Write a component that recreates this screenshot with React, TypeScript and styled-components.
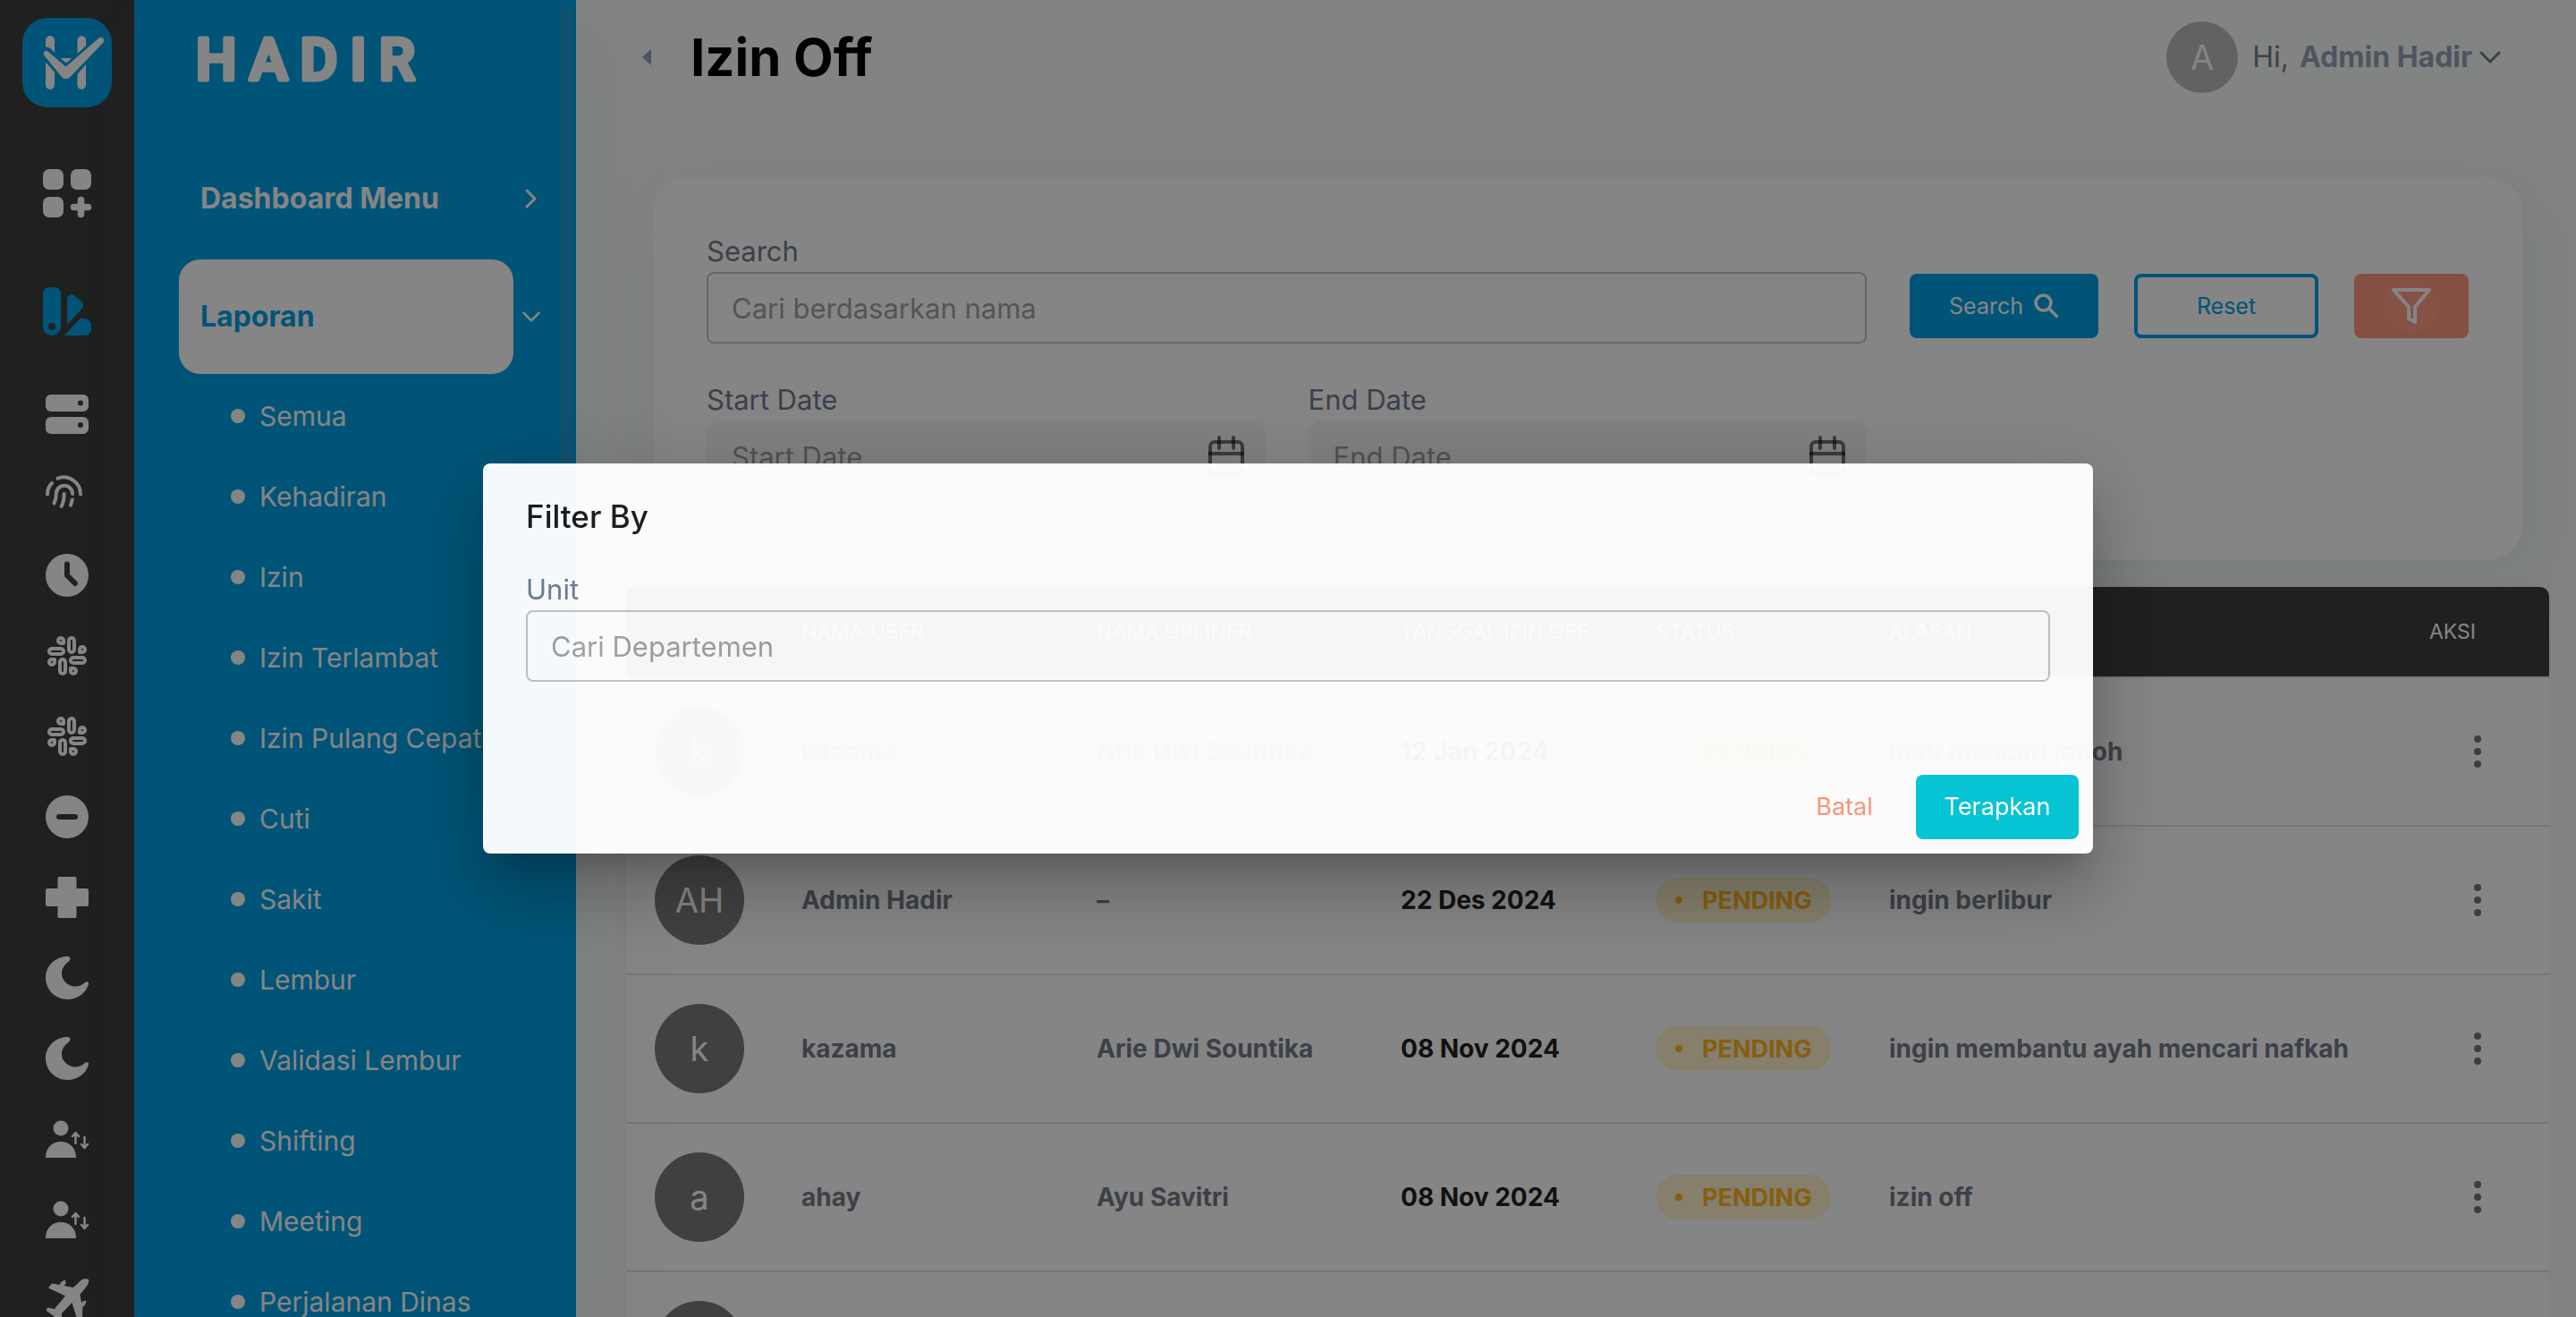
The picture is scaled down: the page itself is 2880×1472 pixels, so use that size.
import React from "react";
import styled, { createGlobalStyle, css } from "styled-components";

const white = "#fff";
const blue = "#00a1e4";
const ink = "#3e3e3e";
const muted = "#757c8b";
const navy = "#98a2bb";

const GlobalStyle = createGlobalStyle`
  *, *::before, *::after { box-sizing: border-box; }
  html, body { margin: 0; background: #fafdfc; overflow: hidden; }
  body, button, input, table { font-family: Inter, "Noto Sans", sans-serif; }
  button { border: 0; margin: 0; padding: 0; background: none; cursor: pointer; }
  a { color: inherit; text-decoration: none; }
`;

/* ---------- layout ---------- */

const Shell = styled.div`
  display: flex;
  height: 100vh;
  overflow: hidden;
`;

const Rail = styled.nav`
  flex: 0 0 150px;
  display: flex;
  flex-direction: column;
  align-items: center;
  background: ${ink};
  overflow: hidden;
`;

const Brand = styled.a`
  flex: none;
  width: 100px;
  height: 100px;
  margin: 20px 0 30px;
  border-radius: 28px;
  background: ${blue};
`;

const RailLink = styled.a<{ $tall?: boolean; $active?: boolean }>`
  flex: none;
  display: flex;
  align-items: center;
  justify-content: center;
  width: 100%;
  height: ${(p) => (p.$tall ? 132 : 90)}px;
  color: ${(p) => (p.$active ? blue : white)};
`;

const RailList = styled.div`
  width: 100%;
  padding-top: 4px;
`;

const Sidebar = styled.aside`
  position: relative;
  flex: 0 0 494px;
  padding: 0 30px 0 50px;
  background: ${blue};
  box-shadow: 28px 34px 80px 8px rgba(112, 144, 176, 0.08);
  overflow: hidden;
`;

const ScrollThumb = styled.span`
  position: absolute;
  top: 4px;
  right: 4px;
  width: 14px;
  height: 900px;
  border-radius: 7px;
  background: rgba(112, 144, 176, 0.25);
`;

const WordmarkLink = styled.a`
  display: block;
  height: 158px;
  padding-left: 16px;
`;

const WordmarkSvg = styled.svg`
  display: block;
  fill: ${white};
  stroke: ${white};
  stroke-width: 5px;
  stroke-linejoin: round;
  font-family: Roboto, sans-serif;
  font-size: 64px;
  font-weight: 500;
  letter-spacing: 0.22em;
`;

const Group = styled.button`
  display: grid;
  grid-template-columns: 374px 1fr;
  align-items: center;
  width: 100%;
  height: 128px;
  margin-bottom: 4px;
  color: ${white};
  text-align: left;
`;

const GroupLabel = styled.span<{ $active?: boolean }>`
  padding: 0 24px;
  border-radius: 24px;
  font-size: 32px;
  font-weight: 700;
  line-height: 128px;
  ${(p) =>
    p.$active &&
    css`
      background: ${white};
      color: ${blue};
    `}
`;

const GroupArrow = styled.span`
  display: flex;
  justify-content: center;
`;

const SubList = styled.ul`
  margin: -2px 0 0;
  padding: 0 0 0 58px;
  list-style: none;
`;

const SubItem = styled.li`
  display: flex;
  align-items: center;
  gap: 16px;
  height: 90px;
  color: ${white};
  font-size: 30px;
  white-space: nowrap;
  &::before {
    content: "";
    width: 16px;
    height: 16px;
    border-radius: 50%;
    background: currentColor;
  }
`;

const Main = styled.main`
  flex: 1;
  min-width: 0;
  padding: 0 30px 0 56px;
`;

const TopBar = styled.header`
  display: flex;
  align-items: center;
  height: 128px;
  margin-bottom: 70px;
  padding: 0 52px 0 18px;
`;

const BackButton = styled.button`
  display: flex;
  width: 54px;
  color: ${navy};
`;

const PageTitle = styled.h1`
  margin: 0;
  color: #000;
  font-size: 58px;
  font-weight: 700;
  line-height: 80px;
`;

const Profile = styled.button`
  display: flex;
  align-items: center;
  margin-left: auto;
  color: ${muted};
  font-size: 32px;
  line-height: 48px;
`;

const ProfileName = styled.span`
  margin: 0 6px 0 12px;
  color: ${navy};
  font-weight: 700;
`;

const Avatar = styled.span<{ $size: number; $bg: string }>`
  display: flex;
  align-items: center;
  justify-content: center;
  width: ${(p) => p.$size}px;
  height: ${(p) => p.$size}px;
  border-radius: 50%;
  background: ${(p) => p.$bg};
  color: ${white};
  font-size: 38px;
  font-weight: 400;
`;

const ProfileAvatar = styled(Avatar)`
  margin-right: 16px;
`;

/* ---------- search card ---------- */

const Card = styled.form`
  display: grid;
  grid-template-columns: 1fr auto;
  gap: 40px 48px;
  margin: 0 30px 30px;
  padding: 60px 60px 76px;
  border-radius: 40px;
  background: ${white};
  box-shadow: 28px 34px 80px 8px rgba(112, 144, 176, 0.08), 0 0 80px 8px rgba(0, 0, 0, 0.03);
`;

const Field = styled.div`
  min-width: 0;
`;

const Label = styled.label`
  display: block;
  color: #717b8f;
  font-size: 31px;
  line-height: 46px;
`;

const Input = styled.input`
  display: block;
  width: 100%;
  height: 80px;
  padding: 0 26px;
  border: 2px solid #c4c4c4;
  border-radius: 8px;
  outline: 0;
  background: transparent;
  color: #212121;
  font-size: 31px;
  &::placeholder {
    color: #212121;
    opacity: 0.42;
  }
`;

const DateBox = styled.div`
  display: flex;
  align-items: center;
  height: 80px;
  padding-right: 22px;
  border-radius: 16px;
  background: #f5f5f5;
`;

const DateInput = styled(Input)`
  flex: 1;
  border-color: transparent;
`;

const IconButton = styled.button`
  display: flex;
  color: rgba(0, 0, 0, 0.54);
`;

const DateRow = styled.div`
  display: grid;
  grid-template-columns: 1fr 1fr;
  gap: 48px;
`;

const Actions = styled.div`
  display: flex;
  align-items: flex-end;
  gap: 40px;
  padding-bottom: 6px;
`;

const Button = styled.button<{ $kind: "solid" | "outline" | "filter" | "text" | "apply" }>`
  display: flex;
  align-items: center;
  justify-content: center;
  gap: 12px;
  height: 72px;
  border-radius: 8px;
  font-size: 25px;
  line-height: 40px;
  ${(p) => p.$kind === "solid" && css`width: 211px; background: ${blue}; color: ${white};`}
  ${(p) => p.$kind === "outline" && css`width: 206px; border: 4px solid ${blue}; color: ${blue};`}
  ${(p) => p.$kind === "filter" && css`width: 128px; background: #ff9a80; color: ${white};`}
  ${(p) => p.$kind === "text" && css`width: 128px; color: #ff9478; font-size: 27px;`}
  ${(p) => p.$kind === "apply" && css`width: 182px; background: #00c6d7; color: ${white}; font-size: 27px;`}
`;

const Ripple = styled.span`
  display: flex;
  align-items: center;
  justify-content: center;
  width: 60px;
  height: 60px;
  border-radius: 50%;
  background: rgba(255, 255, 255, 0.06);
`;

/* ---------- table ---------- */

const TableWrap = styled.div`
  border-radius: 10px 10px 0 0;
  background: ${white};
  box-shadow: 0 0 20px rgba(0, 0, 0, 0.05);
  overflow: hidden;
`;

const Table = styled.table`
  width: 100%;
  table-layout: fixed;
  border-collapse: separate;
  border-spacing: 0;
`;

const Col = styled.col<{ $w?: number }>`
  width: ${(p) => (p.$w ? `${p.$w}px` : "auto")};
`;

const Th = styled.th`
  height: 100px;
  padding: 0 32px;
  background: ${ink};
  color: ${white};
  font-size: 23px;
  font-weight: 400;
  text-align: left;
  white-space: nowrap;
`;

const Td = styled.td<{ $strong?: boolean }>`
  height: 166px;
  padding: 0 32px;
  border-top: 2px solid #e0e0e0;
  color: ${(p) => (p.$strong ? "#222" : muted)};
  font-size: 28px;
  font-weight: 700;
  white-space: nowrap;
`;

const Pill = styled.span`
  display: flex;
  align-items: center;
  gap: 22px;
  width: 196px;
  height: 50px;
  padding-left: 22px;
  border-radius: 25px;
  background: #fff3cd;
  color: #ffb422;
  font-size: 27px;
  &::before {
    content: "";
    width: 8px;
    height: 8px;
    border-radius: 50%;
    background: currentColor;
  }
`;

const MoreButton = styled.button`
  display: flex;
  justify-content: center;
  width: 108px;
  color: #757575;
`;

/* ---------- dialog ---------- */

const Backdrop = styled.div`
  position: fixed;
  inset: 0;
  display: flex;
  align-items: center;
  justify-content: center;
  background: rgba(0, 0, 0, 0.48);
`;

const Dialog = styled.section`
  width: 1800px;
  max-width: calc(100% - 128px);
  border-radius: 8px;
  background: ${white};
  opacity: 0.96;
  box-shadow: 0 22px 30px -14px rgba(0, 0, 0, 0.2), 0 48px 76px 6px rgba(0, 0, 0, 0.14),
    0 18px 92px 16px rgba(0, 0, 0, 0.12);
`;

const DialogTitle = styled.h2`
  margin: 0;
  padding: 32px 48px;
  color: #1a1a1a;
  font-size: 35px;
  font-weight: 500;
  line-height: 54px;
`;

const DialogBody = styled.div`
  padding: 0 48px 88px;
`;

const DialogFooter = styled.footer`
  display: flex;
  justify-content: flex-end;
  gap: 16px;
  padding: 16px;
`;

/* ---------- icons ---------- */

const Svg = ({ size = 60, box = 60, children }: { size?: number; box?: number; children: React.ReactNode }) => (
  <svg width={size} height={size} viewBox={`0 0 ${box} ${box}`} fill="currentColor" aria-hidden="true">
    {children}
  </svg>
);

const BrandIcon = () => (
  <svg width="100" height="100" viewBox="0 0 100 100" fill="#fff" aria-hidden="true">
    <path d="M26 25a5 5 0 0 1 10 0v14.5c-3-5-6-7-10-7zM61.500 25a4.800 4.800 0 0 1 9.600 0v6L61.500 40zM26 49.500L36 60.500V75a5 5 0 0 1-10 0zM61.500 63L71 52V75a4.800 4.800 0 0 1-9.600 0zM42.500 45h13l-6.500 5.500z" />
    <path d="M24.500 42c-2-3.500 1-6.500 4-4.500L48.700 54.500 85 23c3.500-3 8 .5 5.500 4.500L53.500 66c-3 3-7 3-9.500 0z" />
  </svg>
);

const GridAddIcon = () => (
  <Svg>
    <rect x="3" y="3" width="23" height="23" rx="7" />
    <rect x="34" y="3" width="23" height="23" rx="7" />
    <rect x="3" y="34" width="23" height="23" rx="7" />
    <path d="M45.500 37.500v16M37.500 45.500h16" stroke="currentColor" strokeWidth="7.500" strokeLinecap="round" />
  </Svg>
);

const SwatchIcon = () => (
  <Svg>
    <path
      fillRule="evenodd"
      d="M10 3h6a7 7 0 0 1 7 7v37a10 10 0 0 1-20 0V10a7 7 0 0 1 7-7zM13 43a4 4 0 1 0 0 8 4 4 0 0 0 0-8z"
    />
    <path d="M30 44.500V17c0-5 5-7.500 9-4l7 6c2.500 2.500 2.500 6 .5 8.500zM27 57l16-17.500c1.500-1.500 3-2 5-1.500l4 1c3 1 5 3 5 6v5c0 4-3 7-7 7z" />
  </Svg>
);

const ServerIcon = () => (
  <Svg>
    <path
      fillRule="evenodd"
      d="M12 8h36a6 6 0 0 1 6 6v7a6 6 0 0 1-6 6H12a6 6 0 0 1-6-6v-7a6 6 0 0 1 6-6zM45 14.500a3 3 0 1 0 0 6 3 3 0 0 0 0-6zM12 33h36a6 6 0 0 1 6 6v7a6 6 0 0 1-6 6H12a6 6 0 0 1-6-6v-7a6 6 0 0 1 6-6zM45 39a3 3 0 1 0 0 6 3 3 0 0 0 0-6z"
    />
  </Svg>
);

const FingerprintIcon = () => (
  <Svg>
    <g fill="none" stroke="currentColor" strokeWidth="4" strokeLinecap="round">
      <path d="M8 29.500c0-5 1.500-9 5-12.500M19.500 11.700C32 7 45 16 45 29.500M15.500 39.500c2-4 2.300-7 2.300-10.500a9 9 0 0 1 18.300 0M26.700 29c0 5-.5 9.500-3 14M35.800 35.500c-.4 2-1 4-1.900 6.200" />
    </g>
  </Svg>
);

const ClockIcon = () => (
  <Svg>
    <circle cx="30" cy="30" r="24" />
    <path d="M30 17.500V30l9 9" fill="none" stroke={ink} strokeWidth="6" strokeLinecap="round" strokeLinejoin="round" />
  </Svg>
);

const SlackIcon = () => (
  <Svg>
    <g fill="none" stroke="currentColor" strokeWidth="4" strokeLinejoin="round">
      {[0, 90, 180, 270].map((a) => (
        <g key={a} transform={`rotate(${a} 30 30)`}>
          <rect x="32" y="10" width="6" height="16" rx="3" />
          <path d="M23 10a3 3 0 0 1 3 3v3h-3a3 3 0 0 1 0-6z" />
        </g>
      ))}
    </g>
  </Svg>
);

const MinusIcon = () => (
  <Svg>
    <circle cx="30" cy="30" r="24" />
    <path d="M21 30h18" stroke={ink} strokeWidth="6" strokeLinecap="round" />
  </Svg>
);

const PlusIcon = () => (
  <Svg>
    <path d="M21 7h18a1.500 1.500 0 0 1 1.500 1.500V20H52a2 2 0 0 1 2 2v16a2 2 0 0 1-2 2H40.500v11.500A1.500 1.500 0 0 1 39 53H21a1.500 1.500 0 0 1-1.500-1.500V40H8a2 2 0 0 1-2-2V22a2 2 0 0 1 2-2h11.500V8.500A1.500 1.500 0 0 1 21 7z" />
  </Svg>
);

const MoonIcon = () => (
  <Svg>
    <path d="M29 6c4.500-.5 6 2.500 3 5.500-5 3.500-8 8.500-8 13.500 0 8 7 14.500 15 14.500 5 0 8.500-2 11-4.500 2-1.500 4.500-1 4 2-3 10-12 17-24 17C17 54 6 43 6 30S16 7 29 6z" />
  </Svg>
);

const ShiftIcon = () => (
  <Svg>
    <circle cx="23" cy="18" r="8.500" />
    <path d="M6 51c0-11 7-18 17-18s17 7 17 18z" />
    <path
      d="M39.500 35V23.500M36 27l3.500-4 3.500 4M49.500 28v11.500M46 36l3.500 4 3.500-4"
      fill="none"
      stroke="currentColor"
      strokeWidth="2.500"
      strokeLinecap="round"
      strokeLinejoin="round"
    />
  </Svg>
);

const PlaneIcon = () => (
  <Svg>
    <path d="M54 7c.5 2.500 0 5-2 7.500L44.300 24l2 9.500c1-2 3-3.500 5-2.500 0 3-1.500 5-4 7L47 54l-4 3-7.500-24L24 45v8l-3 3-6-8-8.500-6.500 1.500-3 8 1.500 12-14.500L9 16.500l4-5 8.500 1.500c1-3 3.500-5 6.500-5 1 2.500.5 4.500-1.500 6L37 16l8-7.500C48 6 51 5.500 54 7z" />
  </Svg>
);

const Chevron = ({ right, size = 28 }: { right?: boolean; size?: number }) => (
  <svg width={size} height={size} viewBox="0 0 28 28" fill="none" stroke="currentColor" strokeWidth="3" aria-hidden="true">
    <path d={right ? "M9 5l9 9-9 9" : "M4 9l10 10 10-10"} strokeLinecap="round" strokeLinejoin="round" />
  </svg>
);

const CalendarIcon = () => (
  <svg width="44" height="48" viewBox="0 0 44 48" fill="none" stroke="currentColor" strokeWidth="4" aria-hidden="true">
    <rect x="4" y="8" width="36" height="36" rx="5" />
    <path d="M2 21h40" />
    <path d="M14 3v12M30 3v12" strokeLinecap="round" />
  </svg>
);

const railItems = [
  ServerIcon,
  FingerprintIcon,
  ClockIcon,
  SlackIcon,
  SlackIcon,
  MinusIcon,
  PlusIcon,
  MoonIcon,
  MoonIcon,
  ShiftIcon,
  ShiftIcon,
  PlaneIcon,
];

const reports = [
  "Semua",
  "Kehadiran",
  "Izin",
  "Izin Terlambat",
  "Izin Pulang Cepat",
  "Cuti",
  "Sakit",
  "Lembur",
  "Validasi Lembur",
  "Shifting",
  "Meeting",
  "Perjalanan Dinas",
];

const rows = [
  { initials: "k", name: "kazama", upliner: "Arie Dwi Sountika", date: "12 Jan 2024", reason: "mau mencari jodoh" },
  { initials: "AH", name: "Admin Hadir", upliner: "–", date: "22 Des 2024", reason: "ingin berlibur" },
  { initials: "k", name: "kazama", upliner: "Arie Dwi Sountika", date: "08 Nov 2024", reason: "ingin membantu ayah mencari nafkah" },
  { initials: "a", name: "ahay", upliner: "Ayu Savitri", date: "08 Nov 2024", reason: "izin off" },
  { initials: "a", name: "ahay", upliner: "Ayu Savitri", date: "08 Nov 2024", reason: "izin off" },
];

const DateField = ({ id, label }: { id: string; label: string }) => (
  <Field>
    <Label htmlFor={id}>{label}</Label>
    <DateBox>
      <DateInput id={id} placeholder={label} />
      <IconButton type="button" aria-label={`Pick ${label}`}>
        <CalendarIcon />
      </IconButton>
    </DateBox>
  </Field>
);

export default function App() {
  return (
    <>
      <GlobalStyle />
      <Shell>
        <Rail aria-label="Shortcuts">
          <Brand href="#" aria-label="Hadir">
            <BrandIcon />
          </Brand>
          <RailLink $tall href="#" aria-label="Dashboard Menu">
            <GridAddIcon />
          </RailLink>
          <RailLink $tall $active href="#" aria-label="Laporan">
            <SwatchIcon />
          </RailLink>
          <RailList>
            {railItems.map((Icon, i) => (
              <RailLink key={reports[i]} href="#" aria-label={reports[i]}>
                <Icon />
              </RailLink>
            ))}
          </RailList>
        </Rail>

        <Sidebar>
          <ScrollThumb />
          <WordmarkLink href="#">
            <WordmarkSvg width="300" height="120" viewBox="0 0 300 120">
              <text x="3" y="89">
                HADIR
              </text>
            </WordmarkSvg>
          </WordmarkLink>
          <Group type="button">
            <GroupLabel>Dashboard Menu</GroupLabel>
            <GroupArrow>
              <Chevron right />
            </GroupArrow>
          </Group>
          <Group type="button">
            <GroupLabel $active>Laporan</GroupLabel>
            <GroupArrow>
              <Chevron size={24} />
            </GroupArrow>
          </Group>
          <SubList>
            {reports.map((r) => (
              <SubItem key={r}>
                <a href="#">{r}</a>
              </SubItem>
            ))}
          </SubList>
        </Sidebar>

        <Main>
          <TopBar>
            <BackButton type="button" aria-label="Back">
              <svg width="10" height="18" viewBox="0 0 10 18" fill="currentColor" aria-hidden="true">
                <path d="M10 0v18L0 9z" />
              </svg>
            </BackButton>
            <PageTitle>Izin Off</PageTitle>
            <Profile type="button">
              <ProfileAvatar $size={80} $bg="#bdbdbd">
                A
              </ProfileAvatar>
              <span>Hi,</span>
              <ProfileName>Admin Hadir</ProfileName>
              <Chevron />
            </Profile>
          </TopBar>

          <Card onSubmit={(e) => e.preventDefault()}>
            <Field>
              <Label htmlFor="search">Search</Label>
              <Input id="search" placeholder="Cari berdasarkan nama" />
            </Field>
            <Actions>
              <Button $kind="solid" type="submit">
                Search
                <svg width="28" height="28" viewBox="0 0 28 28" fill="none" stroke="currentColor" strokeWidth="3.500" aria-hidden="true">
                  <circle cx="10.500" cy="10.500" r="8.500" />
                  <path d="M17 17l9.500 9.500" />
                </svg>
              </Button>
              <Button $kind="outline" type="reset">
                Reset
              </Button>
              <Button $kind="filter" type="button" aria-label="Filter">
                <Ripple>
                  <svg width="46" height="42" viewBox="0 0 46 42" fill="none" stroke="currentColor" strokeWidth="4" strokeLinejoin="round" aria-hidden="true">
                    <path d="M3 3h40L27 22v17l-7-4V22z" />
                  </svg>
                </Ripple>
              </Button>
            </Actions>
            <DateRow>
              <DateField id="start" label="Start Date" />
              <DateField id="end" label="End Date" />
            </DateRow>
          </Card>

          <TableWrap>
            <Table>
              <colgroup>
                <Col $w={164} />
                <Col $w={330} />
                <Col $w={340} />
                <Col $w={285} />
                <Col $w={261} />
                <Col />
                <Col $w={166} />
              </colgroup>
              <thead>
                <tr>
                  <Th aria-label="Foto" />
                  <Th>NAMA USER</Th>
                  <Th>NAMA UPLINER</Th>
                  <Th>TANGGAL IZIN OFF</Th>
                  <Th>STATUS</Th>
                  <Th>ALASAN</Th>
                  <Th>AKSI</Th>
                </tr>
              </thead>
              <tbody>
                {rows.map((r, i) => (
                  <tr key={i}>
                    <Td>
                      <Avatar $size={100} $bg="#7c7c7c">
                        {r.initials}
                      </Avatar>
                    </Td>
                    <Td>{r.name}</Td>
                    <Td>{r.upliner}</Td>
                    <Td $strong>{r.date}</Td>
                    <Td>
                      <Pill>PENDING</Pill>
                    </Td>
                    <Td>{r.reason}</Td>
                    <Td>
                      <MoreButton type="button" aria-label={`Aksi ${r.name}`}>
                        <svg width="8" height="36" viewBox="0 0 8 36" fill="currentColor" aria-hidden="true">
                          <circle cx="4" cy="4" r="4" />
                          <circle cx="4" cy="18" r="4" />
                          <circle cx="4" cy="32" r="4" />
                        </svg>
                      </MoreButton>
                    </Td>
                  </tr>
                ))}
              </tbody>
            </Table>
          </TableWrap>
        </Main>
      </Shell>

      <Backdrop>
        <Dialog role="dialog" aria-modal="true" aria-labelledby="filter-title">
          <DialogTitle id="filter-title">Filter By</DialogTitle>
          <DialogBody>
            <Label htmlFor="unit">Unit</Label>
            <Input id="unit" placeholder="Cari Departemen" />
          </DialogBody>
          <DialogFooter>
            <Button $kind="text" type="button">
              Batal
            </Button>
            <Button $kind="apply" type="button">
              Terapkan
            </Button>
          </DialogFooter>
        </Dialog>
      </Backdrop>
    </>
  );
}
